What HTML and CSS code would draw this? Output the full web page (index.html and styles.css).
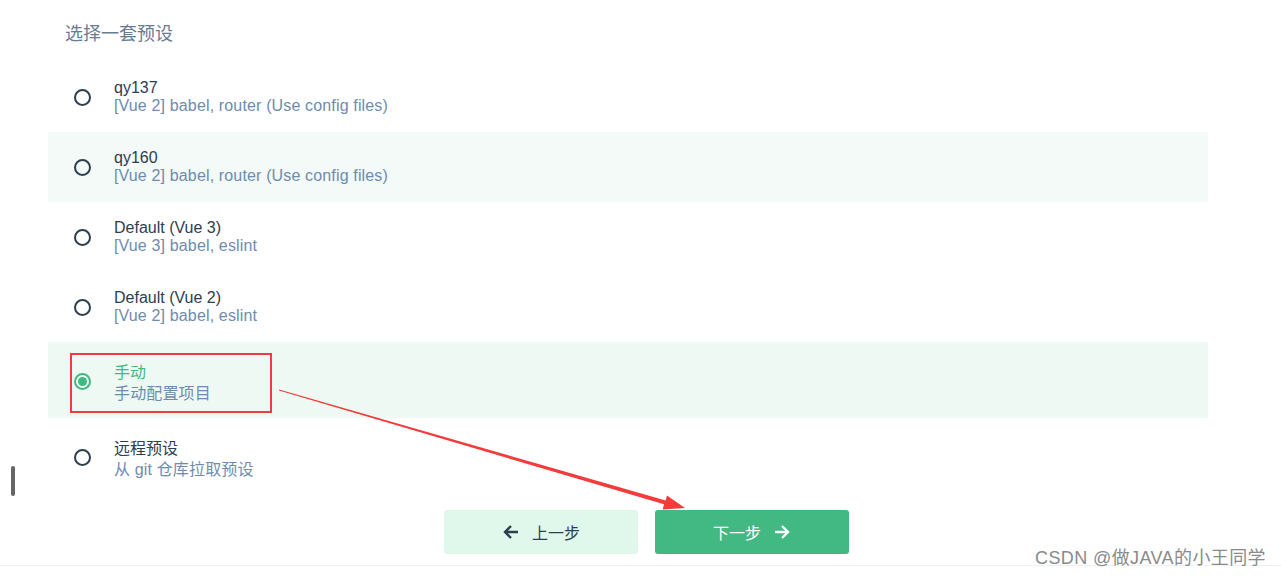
FILE: index.html
```html
<!DOCTYPE html>
<html lang="zh-CN">
<head>
<meta charset="UTF-8">
<title>选择一套预设</title>
<link rel="stylesheet" href="styles.css">
</head>
<body>

<div class="page">
  <h2 class="section-title">选择一套预设</h2>

  <div class="preset-list">
    <div class="preset">
      <span class="radio"></span>
      <div class="preset-info">
        <div class="preset-name">qy137</div>
        <div class="preset-desc">[Vue 2] babel, router (Use config files)</div>
      </div>
    </div>
    <div class="preset hover">
      <span class="radio"></span>
      <div class="preset-info">
        <div class="preset-name">qy160</div>
        <div class="preset-desc">[Vue 2] babel, router (Use config files)</div>
      </div>
    </div>
    <div class="preset">
      <span class="radio"></span>
      <div class="preset-info">
        <div class="preset-name">Default (Vue 3)</div>
        <div class="preset-desc">[Vue 3] babel, eslint</div>
      </div>
    </div>
    <div class="preset">
      <span class="radio"></span>
      <div class="preset-info">
        <div class="preset-name">Default (Vue 2)</div>
        <div class="preset-desc">[Vue 2] babel, eslint</div>
      </div>
    </div>
    <div class="preset cjk selected">
      <span class="radio"></span>
      <div class="preset-info">
        <div class="preset-name">手动</div>
        <div class="preset-desc">手动配置项目</div>
      </div>
    </div>
    <div class="preset cjk">
      <span class="radio"></span>
      <div class="preset-info">
        <div class="preset-name">远程预设</div>
        <div class="preset-desc">从 git 仓库拉取预设</div>
      </div>
    </div>
  </div>

  <div class="actions">
    <button class="btn btn-prev">
      <svg width="18" height="18" viewBox="0 0 18 18"><path d="M16 9H3M9 3L3 9l6 6" fill="none" stroke="#2c3e50" stroke-width="2.4"/></svg>
      <span>上一步</span>
    </button>
    <button class="btn btn-next">
      <span>下一步</span>
      <svg width="18" height="18" viewBox="0 0 18 18"><path d="M2 9h13M9 3l6 6-6 6" fill="none" stroke="#fff" stroke-width="2.4"/></svg>
    </button>
  </div>

  <div class="bottom-line"></div>
</div>

<!-- annotations drawn over the screenshot -->
<div class="mark-box"></div>
<svg class="mark-arrow" width="1281" height="579" viewBox="0 0 1281 579">
  <polygon points="279.1,389.5 665.6,500.6 667,495.4 685,508 662.6,509.4 664,504.2 278.9,390.5" fill="#f33b3b"/>
</svg>
<div class="side-handle"></div>
<div class="watermark">CSDN @做JAVA的小王同学</div>

</body>
</html>
```

FILE: styles.css
```css
html, body {
  margin: 0;
  height: 100%;
  background: #fff;
  font-family: "Liberation Sans", "Noto Sans CJK SC", sans-serif;
  color: #2c3e50;
  overflow: hidden;
}
.page {
  position: relative;
  width: 1281px;
  height: 579px;
}
.section-title {
  margin: 0;
  padding: 22px 0 0 65px;
  font-size: 18px;
  font-weight: normal;
  line-height: 24px;
  color: #687c93;
}
.preset-list {
  margin: 16px 73px 0 48px;
}
.preset {
  display: flex;
  align-items: center;
  box-sizing: border-box;
  min-height: 70px;
  padding: 13px 0 13px 26px;
  line-height: 18px;
}
.preset.cjk {
  min-height: 76px;
  padding-top: 16px;
  padding-bottom: 10px;
  line-height: 21px;
}
.preset.hover {
  background: #f3faf7;
}
.preset.selected {
  background: #eef9f3;
}
.radio {
  box-sizing: border-box;
  width: 17px;
  height: 17px;
  border: 2px solid #2c3e50;
  border-radius: 50%;
  margin-right: 23px;
  flex-shrink: 0;
  display: flex;
  align-items: center;
  justify-content: center;
}
.cjk .radio {
  margin-top: -4px;
}
.selected .radio {
  border-color: #42b983;
}
.selected .radio::after {
  content: "";
  width: 9px;
  height: 9px;
  border-radius: 50%;
  background: #42b983;
}
.preset-name {
  font-size: 16px;
}
.selected .preset-name {
  color: #42b983;
}
.preset-desc {
  font-size: 16px;
  letter-spacing: 0.15px;
  color: #6e8cae;
}
.actions {
  display: flex;
  gap: 17px;
  margin-top: 16px;
  padding-left: 444px;
}
.btn {
  display: flex;
  align-items: center;
  justify-content: center;
  gap: 12px;
  width: 194px;
  height: 44px;
  border: none;
  border-radius: 3px;
  font-family: inherit;
  font-size: 16px;
  cursor: pointer;
}
.btn-prev {
  background: #e0f7ec;
  color: #2c3e50;
}
.btn-next {
  background: #42b983;
  color: #fff;
}
.bottom-line {
  margin-top: 11px;
  height: 1px;
  background: #efefef;
}
.mark-box {
  position: absolute;
  left: 70px;
  top: 353px;
  width: 198px;
  height: 56px;
  border: 2px solid #f33b3b;
}
.mark-arrow {
  position: absolute;
  left: 0;
  top: 0;
  pointer-events: none;
}
.side-handle {
  position: absolute;
  left: 11px;
  top: 466px;
  width: 4px;
  height: 30px;
  border-radius: 2px;
  background: #666;
}
.watermark {
  position: absolute;
  left: 1035px;
  top: 546px;
  font-size: 18px;
  line-height: 24px;
  letter-spacing: 0.4px;
  color: #8a8a8a;
  text-shadow: 0 0 2px #fff;
}
```
